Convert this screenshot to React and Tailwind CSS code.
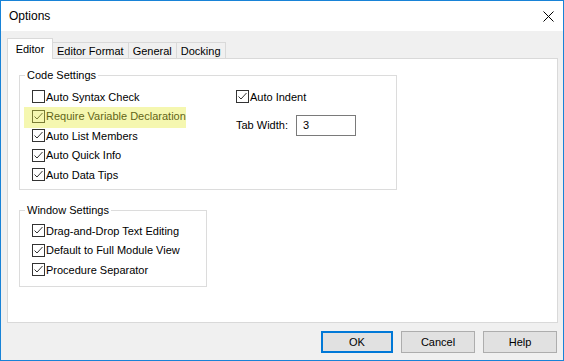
import React from 'react'

const Check = ({ checked }) => (
    <span className="w-[13px] h-[13px] border border-[#333] bg-white flex items-center justify-center shrink-0">
        {checked && (
            <svg width="11" height="11" viewBox="0 0 11 11">
                <polyline points="1.5,5.5 4,8 9.5,2" fill="none" stroke="#333" strokeWidth="1" />
            </svg>
        )}
    </span>
)

const Row = ({ checked, label, highlight }) => (
    <div className="relative flex items-center gap-[1px] h-[19.5px]">
        <Check checked={checked} />
        <span>{label}</span>
        {highlight && (
            <span className="absolute -left-[8px] top-0 w-[162px] h-[21px] bg-[#e6ec3a]/40 pointer-events-none" />
        )}
    </div>
)

const Tab = ({ label, active }) =>
    active ? (
        <div className="relative z-10 w-[46px] h-[21px] -mb-px bg-white border border-b-0 border-[#d9d9d9] flex items-start justify-center pt-[3px]">
            {label}
        </div>
    ) : (
        <div className="h-[16px] px-[4px] bg-[#f0f0f0] border border-l-0 border-b-0 border-[#d9d9d9] flex items-center">
            {label}
        </div>
    )

const Button = ({ label, primary, width }) => (
    <button
        className={`${width} h-[22px] bg-[#e1e1e1] flex items-center justify-center ${
            primary ? 'border-2 border-[#0078d7]' : 'border border-[#adadad]'
        }`}
    >
        {label}
    </button>
)

export default function App() {
    return (
        <div className="w-[564px] h-[361px] border border-[#1883d7] flex flex-col font-['Liberation_Sans',Arial,sans-serif] text-[11px] text-black leading-[14px]">
            {/* title bar */}
            <div className="h-[30px] bg-white flex items-center justify-between pl-[8px] pr-[9px] shrink-0">
                <span className="text-[12px]">Options</span>
                <svg width="11" height="11" viewBox="0 0 11 11">
                    <path d="M0.5 0.5 L10.5 10.5 M10.5 0.5 L0.5 10.5" stroke="#000" strokeWidth="1" />
                </svg>
            </div>

            <div className="flex-1 bg-[#f0f0f0] pt-[7px] px-[6px] flex flex-col">
                {/* tabs */}
                <div className="flex items-end">
                    <Tab label="Editor" active />
                    <Tab label="Editor Format" />
                    <Tab label="General" />
                    <Tab label="Docking" />
                </div>

                {/* panel */}
                <div className="w-[551px] h-[265px] bg-white border border-[#d9d9d9] pl-[11px] pt-[9px]">
                    <fieldset className="w-[378px] h-[122px] border border-[#dcdcdc]">
                        <legend className="ml-[5px] px-[2px]">Code Settings</legend>
                        <div className="flex pt-[5px]">
                            <div className="w-[216px] pl-[12px]">
                                <Row checked={false} label="Auto Syntax Check" />
                                <Row checked label="Require Variable Declaration" highlight />
                                <Row checked label="Auto List Members" />
                                <Row checked label="Auto Quick Info" />
                                <Row checked label="Auto Data Tips" />
                            </div>
                            <div>
                                <Row checked label="Auto Indent" />
                                <div className="flex items-center mt-[8px]">
                                    <span className="w-[60px]">Tab Width:</span>
                                    <div className="w-[60px] h-[21px] border border-[#7a7a7a] flex items-center pl-[6px]">3</div>
                                </div>
                            </div>
                        </div>
                    </fieldset>

                    <fieldset className="w-[188px] h-[84px] mt-[13px] border border-[#dcdcdc]">
                        <legend className="ml-[5px] px-[2px]">Window Settings</legend>
                        <div className="pl-[12px] pt-[4px]">
                            <Row checked label="Drag-and-Drop Text Editing" />
                            <Row checked label="Default to Full Module View" />
                            <Row checked label="Procedure Separator" />
                        </div>
                    </fieldset>
                </div>

                {/* buttons */}
                <div className="flex justify-end gap-[8px] mt-[8px]">
                    <Button label="OK" primary width="w-[72px]" />
                    <Button label="Cancel" width="w-[74px]" />
                    <Button label="Help" width="w-[74px]" />
                </div>
            </div>
        </div>
    )
}
